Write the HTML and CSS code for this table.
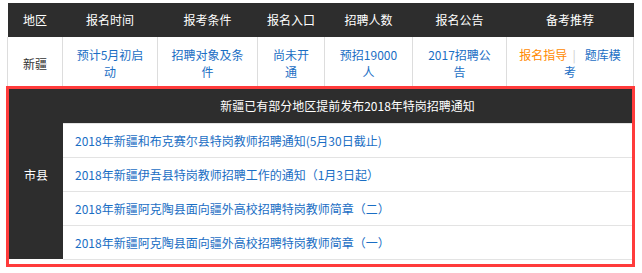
FILE: index.html
```html
<!DOCTYPE html>
<html lang="zh-CN">
<head>
<meta charset="utf-8">
<title>新疆特岗教师招聘</title>
<link rel="stylesheet" href="styles.css">
</head>
<body>
<div class="page">
  <table class="exam">
    <colgroup>
      <col class="c-area"><col class="c-time"><col class="c-cond"><col class="c-entry"><col class="c-num"><col class="c-notice"><col class="c-rec">
    </colgroup>
    <thead>
      <tr><th>地区</th><th>报名时间</th><th>报考条件</th><th>报名入口</th><th>招聘人数</th><th>报名公告</th><th>备考推荐</th></tr>
    </thead>
    <tbody>
      <tr>
        <td class="plain">新疆</td>
        <td><a href="#">预计5月初启动</a></td>
        <td><a href="#">招聘对象及条件</a></td>
        <td><a href="#">尚未开通</a></td>
        <td><a href="#">预招19000人</a></td>
        <td><a href="#">2017招聘公告</a></td>
        <td><a href="#" class="hot">报名指导</a><span class="sep">|</span><a href="#">题库模考</a></td>
      </tr>
    </tbody>
  </table>

  <div class="notice">
    <table class="list">
      <tr>
        <td class="city" rowspan="5">市县</td>
        <th class="title">新疆已有部分地区提前发布2018年特岗招聘通知</th>
      </tr>
      <tr><td><a href="#">2018年新疆和布克赛尔县特岗教师招聘通知(5月30日截止)</a></td></tr>
      <tr><td><a href="#">2018年新疆伊吾县特岗教师招聘工作的通知（1月3日起）</a></td></tr>
      <tr><td><a href="#">2018年新疆阿克陶县面向疆外高校招聘特岗教师简章（二）</a></td></tr>
      <tr><td><a href="#">2018年新疆阿克陶县面向疆外高校招聘特岗教师简章（一）</a></td></tr>
    </table>
  </div>
</div>
</body>
</html>
```

FILE: styles.css
```css
* { box-sizing: border-box; }

body {
  margin: 0;
  background: #fff;
  font-family: "Noto Sans CJK SC", "Noto Sans", sans-serif;
  font-size: 12px;
  color: #333;
}

a { text-decoration: none; color: #1a6ec4; }

.page {
  width: 629px;
  padding: 3px 0 0 6px;
  box-sizing: content-box;
}

.exam {
  margin-left: 1px;
  width: 626px;
  table-layout: fixed;
  border-collapse: collapse;
}

.c-area { width: 55px; }
.c-time { width: 95px; }
.c-cond { width: 100px; }
.c-entry { width: 67px; }
.c-num { width: 88px; }
.c-notice { width: 94px; }
.c-rec { width: 127px; }

.exam th {
  background: #2d2d2d;
  color: #fff;
  font-weight: normal;
  height: 34px;
  padding: 0;
  text-align: center;
  line-height: 34px;
  border: none;
}

.exam td {
  height: 49px;
  padding: 9px 11px 6px;
  line-height: 17px;
  text-align: center;
  vertical-align: middle;
  border-left: 1px solid #dddddd;
  border-right: 1px solid #dddddd;
}

.exam td.plain { color: #333; }

.exam .hot { color: #ff8a00; }

.exam .sep {
  color: #cccccc;
  margin: 0 9px 0 5px;
}

.notice {
  width: 629px;
  border: 3px solid #ff3b3b;
  padding-bottom: 4px;
}

.list {
  width: 623px;
  border-collapse: collapse;
  table-layout: fixed;
}

.list td,
.list th {
  padding: 0;
}

.list .city {
  width: 54px;
  background: #2d2d2d;
  color: #fff;
  text-align: center;
  vertical-align: middle;
}

.list .title {
  height: 34px;
  background: #2d2d2d;
  color: #fff;
  font-weight: normal;
  text-align: center;
  border-bottom: 1px solid #e3e3e3;
}

.list td:not(.city) {
  height: 34px;
  padding-left: 12px;
  border-bottom: 1px solid #e3e3e3;
  text-align: left;
  vertical-align: middle;
}
```
